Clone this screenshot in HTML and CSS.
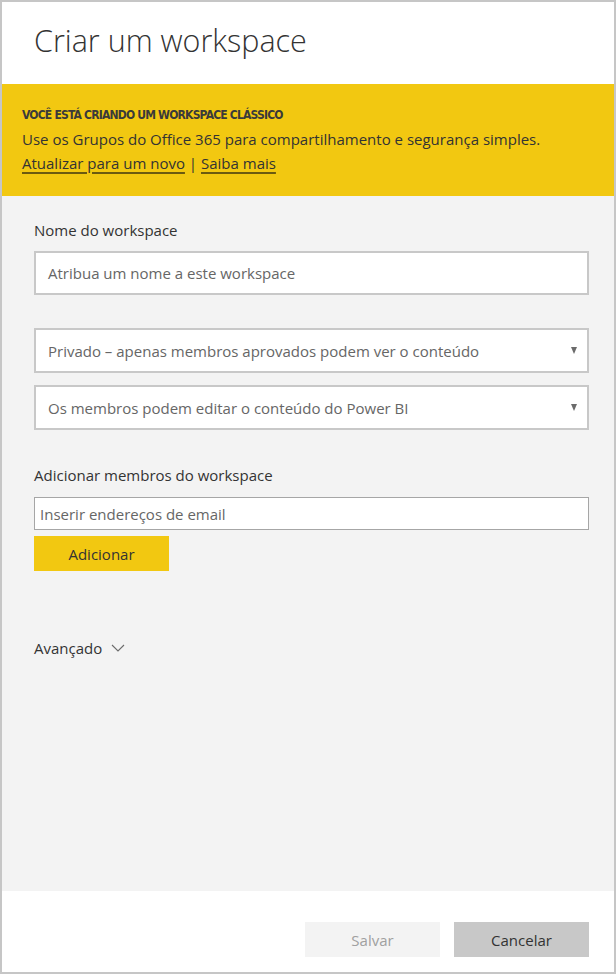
FILE: index.html
```html
<!DOCTYPE html>
<html lang="pt">
<head>
<meta charset="utf-8">
<title>Criar um workspace</title>
<link rel="stylesheet" href="styles.css">
</head>
<body>
<div class="dialog">
  <div class="header">
    <h1 class="title">Criar um workspace</h1>
  </div>
  <div class="banner">
    <div class="banner-head">VOCÊ ESTÁ CRIANDO UM WORKSPACE CLÁSSICO</div>
    <div class="banner-text">Use os Grupos do Office 365 para compartilhamento e segurança simples.</div>
    <div class="banner-links"><a class="link">Atualizar para um novo</a> | <a class="link">Saiba mais</a></div>
  </div>
  <div class="content">
    <div class="label">Nome do workspace</div>
    <div class="field name-field">Atribua um nome a este workspace</div>
    <div class="select first-select"><span>Privado – apenas membros aprovados podem ver o conteúdo</span><span class="arrow"></span></div>
    <div class="select"><span>Os membros podem editar o conteúdo do Power BI</span><span class="arrow"></span></div>
    <div class="label members-label">Adicionar membros do workspace</div>
    <div class="email-field">Inserir endereços de email</div>
    <div class="add-btn">Adicionar</div>
    <div class="advanced">Avançado
      <svg class="chev" width="14" height="8" viewBox="0 0 14 8"><path d="M1 1 L7 7 L13 1" fill="none" stroke="#6b6b6b" stroke-width="1.1"/></svg>
    </div>
  </div>
  <div class="footer">
    <div class="btn save">Salvar</div>
    <div class="btn cancel">Cancelar</div>
  </div>
</div>
</body>
</html>
```

FILE: styles.css
```css
html, body {
  margin: 0;
  padding: 0;
}
body {
  font-family: "Open Sans", "Noto Sans", sans-serif;
  color: #333;
}
.dialog {
  width: 612px;
  height: 970px;
  border: 2px solid #c6c6c6;
  display: flex;
  flex-direction: column;
  background: #fff;
}
.header {
  height: 82px;
  padding-left: 32px;
  box-sizing: border-box;
}
.title {
  margin: 0;
  padding-top: 19px;
  font-weight: 300;
  font-size: 30.5px;
  line-height: 38px;
  color: #333;
}
.banner {
  height: 112px;
  box-sizing: border-box;
  background: #f2c811;
  padding: 24px 20px 0 20px;
}
.banner-head {
  font-family: "DejaVu Sans Condensed", "DejaVu Sans", sans-serif;
  font-weight: bold;
  font-size: 12px;
  line-height: 14px;
  color: #3a3a3a;
  letter-spacing: -0.8px;
}
.banner-text {
  margin-top: 7px;
  font-size: 15px;
  line-height: 20px;
  color: #333;
}
.banner-links {
  margin-top: 4px;
  font-size: 15px;
  line-height: 20px;
  color: #333;
}
.link {
  text-decoration: underline;
  text-decoration-color: #6b5a10;
  text-underline-offset: 3px;
  text-decoration-thickness: 1.5px;
}
.content {
  flex: 1;
  background: #f3f3f3;
  padding: 24px 25px 0 32px;
  display: flex;
  flex-direction: column;
  align-items: flex-start;
}
.label {
  font-size: 15px;
  line-height: 20px;
  color: #333;
}
.field, .select {
  width: 100%;
  box-sizing: border-box;
  background: #fff;
  border: 2px solid #c8c8c8;
  font-size: 15px;
  color: #666;
  padding: 0 12px;
  display: flex;
  align-items: center;
}
.name-field {
  margin-top: 11px;
  height: 44px;
}
.select {
  height: 45px;
  margin-top: 12px;
  justify-content: space-between;
  padding-right: 10px;
}
.first-select {
  margin-top: 33px;
}
.arrow {
  width: 0;
  height: 0;
  border-left: 3.5px solid transparent;
  border-right: 3.5px solid transparent;
  border-top: 7px solid #6b6b6b;
}
.members-label {
  margin-top: 35px;
}
.email-field {
  margin-top: 12px;
  width: 100%;
  height: 33px;
  box-sizing: border-box;
  background: #fff;
  border: 1px solid #a6a6a6;
  padding: 0 5px;
  display: flex;
  align-items: center;
  font-size: 15px;
  color: #666;
}
.add-btn {
  margin-top: 6px;
  width: 135px;
  height: 35px;
  background: #f2c811;
  display: flex;
  align-items: center;
  justify-content: center;
  font-size: 15px;
  color: #333;
}
.advanced {
  margin-top: 67px;
  font-size: 15px;
  line-height: 20px;
  color: #333;
  display: flex;
  align-items: center;
  gap: 9px;
}
.chev {
  display: block;
}
.footer {
  height: 81px;
  box-sizing: border-box;
  padding: 31px 25px 0 0;
  display: flex;
  justify-content: flex-end;
  align-items: flex-start;
  gap: 14px;
}
.btn {
  width: 135px;
  height: 35px;
  display: flex;
  align-items: center;
  justify-content: center;
  font-size: 15px;
}
.save {
  background: #f3f3f3;
  color: #a0a0a0;
}
.cancel {
  background: #c8c8c8;
  color: #333;
}
```
